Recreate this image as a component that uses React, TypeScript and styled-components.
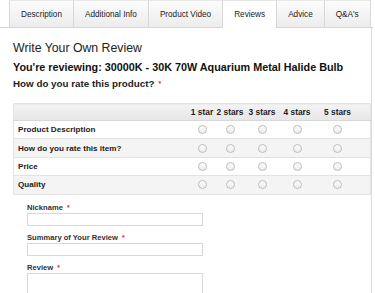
import React from 'react';
import styled, {createGlobalStyle} from 'styled-components';

const GlobalStyle = createGlobalStyle`
  body {
    margin: 0;
    background: #fff;
    font-family: "Liberation Sans", Arial, Helvetica, sans-serif;
    color: #222;
  }
`;

const Page = styled.div`
  width: 375px;
  height: 293px;
  overflow: hidden;
`;

const TabBar = styled.ul`
  display: flex;
  margin: 0;
  padding: 0 0 0 10px;
  list-style: none;
  height: 27px;
  width: 363px;
  border-bottom: 1px solid #d6d6d6;
`;

const Tab = styled.li<{ $active?: boolean }>`
  display: flex;
  align-items: center;
  justify-content: center;
  padding: 0 11px;
  margin-left: -1px;
  height: ${p => p.$active ? '28px' : '27px'};
  box-sizing: border-box;
  border: 1px solid #d8d8d8;
  border-top-color: ${p => p.$active ? '#e4e4e4' : '#e8e8e8'};
  border-bottom: none;
  background: ${p => p.$active ? '#fff' : 'linear-gradient(#fcfcfc, #ececec)'};
  font-size: 8.2px;
  color: #222;
  white-space: nowrap;
  position: relative;
  z-index: ${p => p.$active ? 1 : 0};
`;

const Panel = styled.div`
  width: 372px;
  height: 266px;
  box-sizing: border-box;
  border-right: 1px solid #dcdcdc;
  padding: 13px 0 0 13px;
`;

const Title = styled.h2`
  margin: 0;
  font-size: 12.3px;
  line-height: 15px;
  font-weight: normal;
  color: #222;
`;

const Subtitle = styled.h3`
  margin: 5px 0 0;
  font-size: 10.8px;
  line-height: 13px;
  font-weight: bold;
  color: #111;
`;

const Question = styled.h4`
  margin: 4px 0 0;
  font-size: 9.8px;
  line-height: 12px;
  font-weight: bold;
  color: #222;
`;

const Required = styled.em`
  color: #e02b27;
  font-style: normal;
  font-size: 7px;
  line-height: 1;
  margin-left: 4px;
  vertical-align: 1px;
`;

const Table = styled.table`
  margin-top: 13px;
  border-collapse: collapse;
  table-layout: fixed;
  width: 346px;
  border: 1px solid #e2e2e2;
`;

const HeadCell = styled.th<{ $w: number; $last?: boolean }>`
  width: ${p => p.$w}px;
  height: 16px;
  padding: ${p => p.$last ? '0 10px 0 0' : '0'};
  font-size: 8.4px;
  font-weight: bold;
  color: #222;
  text-align: center;
  white-space: nowrap;
  background: linear-gradient(#f3f3f3, #e6e6e6);
  border-bottom: 1px solid #d8d8d8;
`;

const Row = styled.tr<{ $odd: boolean }>`
  background: ${p => p.$odd ? '#f4f4f4' : '#fff'};
  border-bottom: 1px solid #e2e2e2;
`;

const Label = styled.th`
  height: 17.4px;
  padding: 0 0 0 4px;
  text-align: left;
  font-size: 8.1px;
  font-weight: bold;
  color: #1a1a1a;
`;

const Cell = styled.td<{ $last?: boolean }>`
  padding: ${p => p.$last ? '0 10px 0 0' : '0'};
  text-align: center;
  line-height: 0;
`;

const Radio = styled.input`
  appearance: none;
  width: 9px;
  height: 9px;
  margin: 0;
  border-radius: 50%;
  border: 1px solid #bdbdbd;
  background: linear-gradient(#fdfdfd, #ececec);
`;

const Form = styled.div`
  padding: 8px 0 0 14px;
  display: flex;
  flex-direction: column;
`;

const FieldLabel = styled.label`
  display: flex;
  align-items: center;
  height: 9px;
  font-size: 7.6px;
  font-weight: bold;
  color: #333;
  margin-bottom: 1.5px;
`;

const Input = styled.input`
  width: 176px;
  height: 13px;
  box-sizing: border-box;
  margin: 0 0 6.5px;
  border: 1px solid #d8d8d8;
  background: #fff;
`;

const TextArea = styled.textarea`
  width: 176px;
  height: 40px;
  box-sizing: border-box;
  margin: 0;
  border: 1px solid #d8d8d8;
  resize: none;
`;

const tabs = ['Description', 'Additional Info', 'Product Video', 'Reviews', 'Advice', "Q&A's"];
const stars = [
  {text: '1 star', w: 26},
  {text: '2 stars', w: 30},
  {text: '3 stars', w: 34},
  {text: '4 stars', w: 36},
  {text: '5 stars', w: 45},
];
const ratings = ['Product Description', 'How do you rate this item?', 'Price', 'Quality'];

const App = () => {
  return (
    <Page>
      <GlobalStyle/>
      <TabBar>
        {tabs.map(t => <Tab key={t} $active={t === 'Reviews'}>{t}</Tab>)}
      </TabBar>
      <Panel>
        <Title>Write Your Own Review</Title>
        <Subtitle>You're reviewing: 30000K - 30K 70W Aquarium Metal Halide Bulb</Subtitle>
        <Question>How do you rate this product?<Required>*</Required></Question>
        <Table>
          <thead>
            <tr>
              <HeadCell $w={175}>&nbsp;</HeadCell>
              {stars.map((s, i) =>
                <HeadCell key={s.text} $w={s.w} $last={i === 4}>{s.text}</HeadCell>
              )}
            </tr>
          </thead>
          <tbody>
            {ratings.map((r, i) => (
              <Row key={r} $odd={i % 2 === 1}>
                <Label>{r}</Label>
                {stars.map((s, j) => (
                  <Cell key={s.text} $last={j === 4}>
                    <Radio type="radio" name={r}/>
                  </Cell>
                ))}
              </Row>
            ))}
          </tbody>
        </Table>
        <Form>
          <FieldLabel>Nickname<Required>*</Required></FieldLabel>
          <Input type="text"/>
          <FieldLabel>Summary of Your Review<Required>*</Required></FieldLabel>
          <Input type="text"/>
          <FieldLabel>Review<Required>*</Required></FieldLabel>
          <TextArea/>
        </Form>
      </Panel>
    </Page>
  );
};

export default App;
